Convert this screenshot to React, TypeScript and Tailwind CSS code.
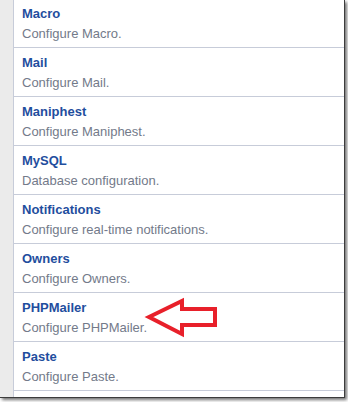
const items = [
  { name: "Macro", desc: "Configure Macro." },
  { name: "Mail", desc: "Configure Mail." },
  { name: "Maniphest", desc: "Configure Maniphest." },
  { name: "MySQL", desc: "Database configuration." },
  { name: "Notifications", desc: "Configure real-time notifications." },
  { name: "Owners", desc: "Configure Owners." },
  { name: "PHPMailer", desc: "Configure PHPMailer." },
  { name: "Paste", desc: "Configure Paste." },
];

export default function App() {
  return (
    <div className="relative w-[348px] h-[402px] bg-white overflow-hidden font-['Liberation_Sans',Arial,sans-serif]">
      {/* screenshot frame with drop shadow */}
      <div className="w-[345px] h-[398px] border-r border-b border-[#3c3c3c] shadow-[2px_2px_3px_rgba(0,0,0,0.55)] flex overflow-hidden">
        <div className="w-[13px] shrink-0 bg-[#ebebeb]" />
        <div className="flex-1 border-l border-[#c7ccd9] bg-white">
          <ul className="-mt-px">
            {items.map((item) => (
              <li key={item.name} className="h-[49px] border-b border-[#c7ccd9] pl-2 pt-1.5">
                <a href="#" className="block text-[13px] leading-[18px] font-bold text-[#1f4e9e]">
                  {item.name}
                </a>
                <div className="mt-0.5 text-[13px] leading-[18px] text-[#737a8a]">{item.desc}</div>
              </li>
            ))}
          </ul>
        </div>
      </div>

      {/* red callout arrow */}
      <svg className="absolute left-0 top-0 pointer-events-none" width="348" height="402" viewBox="0 0 348 402">
        <polygon
          points="149,317 182,301 182,309 215,309 215,325 182,325 182,334"
          fill="none"
          stroke="#e8202a"
          strokeWidth="4"
          strokeLinejoin="miter"
        />
      </svg>
    </div>
  );
}
